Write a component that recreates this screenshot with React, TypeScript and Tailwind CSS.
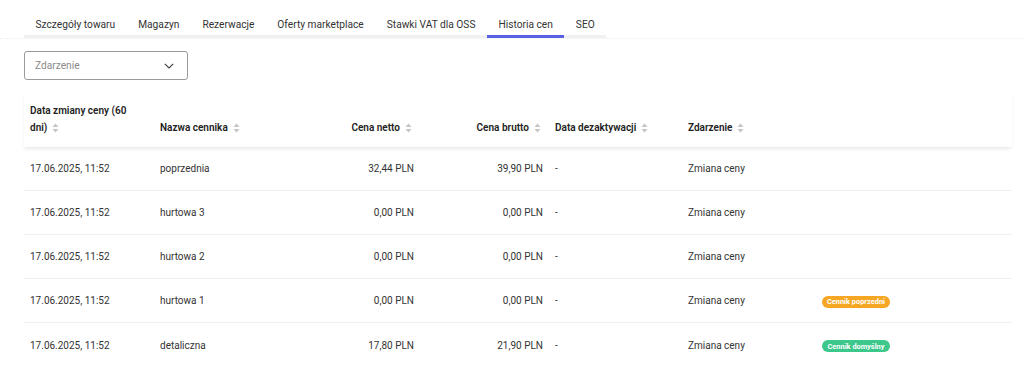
import React from "react";

const tabs = [
  "Szczegóły towaru",
  "Magazyn",
  "Rezerwacje",
  "Oferty marketplace",
  "Stawki VAT dla OSS",
  "Historia cen",
  "SEO",
];

type Row = {
  date: string;
  name: string;
  netto: string;
  brutto: string;
  badge?: "prev" | "default";
};

const rows: Row[] = [
  { date: "17.06.2025, 11:52", name: "poprzednia", netto: "32,44 PLN", brutto: "39,90 PLN" },
  { date: "17.06.2025, 11:52", name: "hurtowa 3", netto: "0,00 PLN", brutto: "0,00 PLN" },
  { date: "17.06.2025, 11:52", name: "hurtowa 2", netto: "0,00 PLN", brutto: "0,00 PLN" },
  { date: "17.06.2025, 11:52", name: "hurtowa 1", netto: "0,00 PLN", brutto: "0,00 PLN", badge: "prev" },
  { date: "17.06.2025, 11:52", name: "detaliczna", netto: "17,80 PLN", brutto: "21,90 PLN", badge: "default" },
];

const SortIcon = () => (
  <svg className="ml-[5px] inline-block shrink-0" width="7" height="10" viewBox="0 0 7 10">
    <path d="M3.5 0.5L6.5 4H0.5z" fill="#c4c4c4" />
    <path d="M3.5 9.5L6.5 6H0.5z" fill="#c4c4c4" />
  </svg>
);

const Badge = ({ kind }: { kind: "prev" | "default" }) => (
  <span
    className={`inline-flex h-[12px] w-[68px] items-center justify-center rounded-full text-[7.4px] font-bold text-white ${
      kind === "prev" ? "bg-[#f5a623]" : "bg-[#3cc78b]"
    }`}
  >
    {kind === "prev" ? "Cennik poprzedni" : "Cennik domyślny"}
  </span>
);

export default function App() {
  return (
    <div className="h-[378px] w-[1024px] overflow-hidden bg-white pt-[8px] font-['Roboto',sans-serif] text-[10px] text-[#333]">
      {/* zakładki */}
      <div className="border-b border-dotted border-[#ececec]">
        <div className="ml-6 flex">
          {tabs.map((t) => (
            <div
              key={t}
              className={`border-b-[3px] px-[11.5px] pb-[3px] pt-[10px] text-[10.2px] leading-[14px] ${
                t === "Historia cen" ? "border-[#5a60e4]" : "border-[#f0f0f0]"
              }`}
            >
              {t}
            </div>
          ))}
        </div>
      </div>

      {/* filtr */}
      <div className="ml-6 mt-[12px] flex h-[29px] w-[164px] items-center justify-between rounded-[3px] border border-[#9a9a9a] pl-[10px] pr-[13px]">
        <span className="text-[10.2px] text-[#8a8a8a]">Zdarzenie</span>
        <svg width="10" height="6" viewBox="0 0 10 6" fill="none">
          <path d="M0.8 0.8l4.2 4.2L9.2 0.8" stroke="#444" strokeWidth="1.2" />
        </svg>
      </div>

      {/* tabela */}
      <div className="ml-6 mr-3 mt-[10px]">
        <div className="grid h-[57px] grid-cols-[130px_133px_133px_129px_133px_134px_1fr] items-end pb-[11px] font-semibold text-[#222] leading-[17px] shadow-[0_3px_4px_-1px_rgba(0,0,0,0.09)]">
          <div className="max-w-[112px] pl-[6px]">
            Data zmiany ceny (60 dni)
            <SortIcon />
          </div>
          <div className="flex items-center px-[6px]">
            Nazwa cennika
            <SortIcon />
          </div>
          <div className="flex items-center justify-end pl-[6px] pr-[8px]">
            Cena netto
            <SortIcon />
          </div>
          <div className="flex items-center justify-end pl-[6px] pr-[8px]">
            Cena brutto
            <SortIcon />
          </div>
          <div className="flex items-center px-[6px]">
            Data dezaktywacji
            <SortIcon />
          </div>
          <div className="flex items-center px-[6px]">
            Zdarzenie
            <SortIcon />
          </div>
          <div />
        </div>

        {rows.map((r, i) => (
          <div
            key={r.name}
            className={`grid h-[44px] grid-cols-[130px_133px_133px_129px_133px_134px_1fr] items-center ${
              i < rows.length - 1 ? "border-b border-[#eef0f6]" : ""
            }`}
          >
            <div className="px-[6px]">{r.date}</div>
            <div className="px-[6px]">{r.name}</div>
            <div className="px-[6px] text-right">{r.netto}</div>
            <div className="px-[6px] text-right">{r.brutto}</div>
            <div className="px-[6px]">-</div>
            <div className="px-[6px]">Zmiana ceny</div>
            <div className="px-[6px]">{r.badge && <Badge kind={r.badge} />}</div>
          </div>
        ))}
      </div>
    </div>
  );
}
